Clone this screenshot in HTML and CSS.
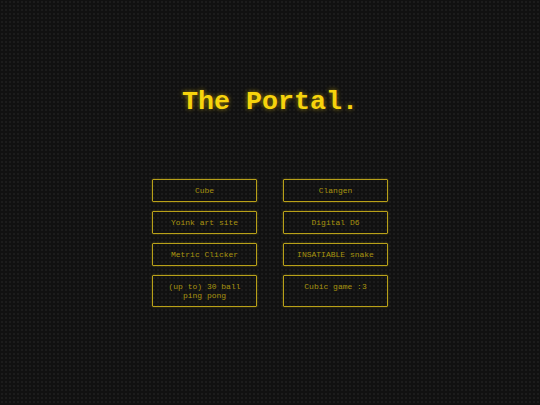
FILE: index.html
```html
<!DOCTYPE html>
<html>
<head>
<meta charset="utf-8">
<link rel="stylesheet" href="styles.css">
</head>
<body>
<main class="page">
  <h1 class="title">The Portal.</h1>
  <div class="grid">
    <a class="btn" href="#">Cube</a>
    <a class="btn" href="#">Clangen</a>
    <a class="btn" href="#">Yoink art site</a>
    <a class="btn" href="#">Digital D6</a>
    <a class="btn" href="#">Metric Clicker</a>
    <a class="btn" href="#">INSATIABLE snake</a>
    <a class="btn" href="#">(up to) 30 ball ping pong</a>
    <a class="btn" href="#">Cubic game :3</a>
  </div>
</main>
</body>
</html>
```
FILE: styles.css
```css
html, body {
  margin: 0;
  padding: 0;
  height: 100%;
}
body {
  background-color: #111111;
  background-image: radial-gradient(circle, #1c1c1c 0.8px, transparent 1.2px);
  background-size: 4px 4px;
  font-family: "Liberation Mono", "Courier New", monospace;
}
.page {
  display: flex;
  flex-direction: column;
  align-items: center;
  padding-top: 86px;
}
.title {
  margin: 0;
  font-size: 26.7px;
  line-height: 32px;
  font-weight: bold;
  color: #f7d40c;
  text-shadow: 0 0 5px rgba(255, 215, 0, 0.55);
}
.grid {
  margin-top: 61px;
  display: grid;
  grid-template-columns: 105px 105px;
  column-gap: 26px;
  row-gap: 9px;
}
.btn {
  display: block;
  border: 1px solid #b8a018;
  border-radius: 1px;
  padding: 6px 8px;
  font-size: 8px;
  line-height: 9px;
  color: #a8930f;
  text-align: center;
  text-decoration: none;
  box-shadow: 0 0 2px rgba(200, 170, 20, 0.45);
}
```
